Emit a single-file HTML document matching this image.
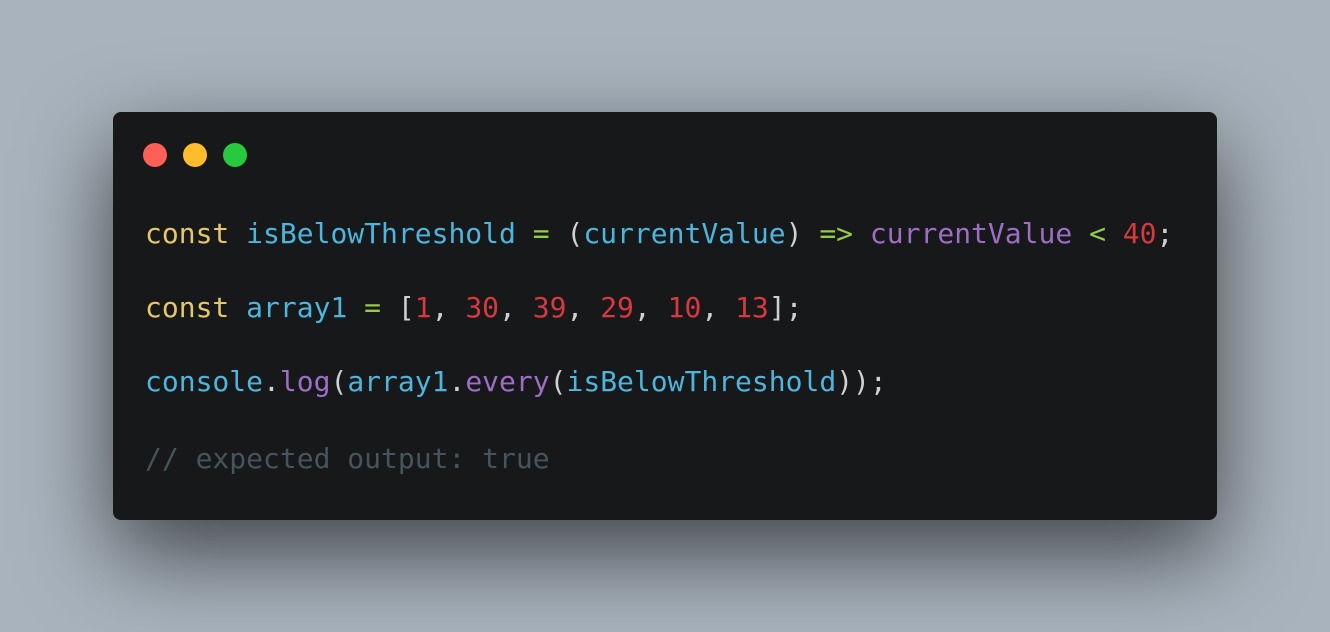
<!DOCTYPE html>
<html><head><meta charset="utf-8"><style>
html,body{margin:0;padding:0;}
body{width:1330px;height:632px;background:#a8b3bd;position:relative;overflow:hidden;}
.win{position:absolute;left:113px;top:112px;width:1104px;height:408px;background:#16181a;border-radius:8px;box-shadow:0 34px 90px rgba(0,0,0,0.62);}
.dot{position:absolute;top:31px;width:24px;height:24px;border-radius:50%;}
pre{position:absolute;left:32px;top:85px;margin:0;font-family:"DejaVu Sans Mono","Liberation Mono",monospace;font-size:28px;line-height:74px;color:#d4d4d4;}
.k{color:#e5c76b}.v{color:#4eb5dc}.o{color:#96cc46}.p{color:#9d6ec4}.n{color:#d8393f}.c{color:#46555b;position:relative;top:3px}.w{color:#d0d0d0}
</style></head><body>
<div class="win">
<div class="dot" style="left:30px;background:#ff5f56"></div>
<div class="dot" style="left:70px;background:#ffbd2e"></div>
<div class="dot" style="left:110px;background:#27c93f"></div>
<pre><span class="k">const</span> <span class="v">isBelowThreshold</span> <span class="o">=</span> <span class="w">(</span><span class="v">currentValue</span><span class="w">)</span> <span class="o">=&gt;</span> <span class="p">currentValue</span> <span class="o">&lt;</span> <span class="n">40</span><span class="w">;</span>
<span class="k">const</span> <span class="v">array1</span> <span class="o">=</span> <span class="w">[</span><span class="n">1</span><span class="w">,</span> <span class="n">30</span><span class="w">,</span> <span class="n">39</span><span class="w">,</span> <span class="n">29</span><span class="w">,</span> <span class="n">10</span><span class="w">,</span> <span class="n">13</span><span class="w">];</span>
<span class="v">console</span><span class="w">.</span><span class="p">log</span><span class="w">(</span><span class="v">array1</span><span class="w">.</span><span class="p">every</span><span class="w">(</span><span class="v">isBelowThreshold</span><span class="w">));</span>
<span class="c">// expected output: true</span></pre>
</div>
</body></html>
